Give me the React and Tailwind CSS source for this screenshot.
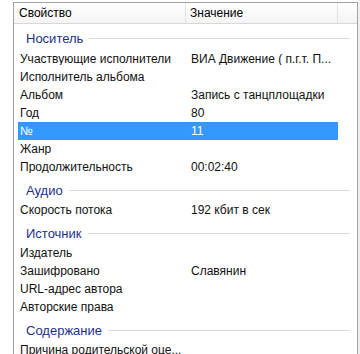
import React from "react";

const Row = ({ label, value, selected }) => (
  <div
    className={`ml-[4px] flex h-[18px] w-[320px] items-center text-[12px] leading-none ${
      selected ? "bg-[#3399ff] text-white" : "text-[#111]"
    }`}
  >
    <div className="w-[171px] shrink-0 truncate pl-[2px]">{label}</div>
    <div className="min-w-0 flex-1 truncate pl-[2px]">{value}</div>
  </div>
);

const Group = ({ title, h = "h-[25px]" }) => (
  <div className={`ml-[12px] mr-[7px] flex ${h} items-center pt-[3px]`}>
    <span className="text-[13px] leading-none text-[#1e3287]">{title}</span>
    <div className="ml-[6px] h-px flex-1 bg-[#d6dbe3]" />
  </div>
);

export default function App() {
  return (
    <div
      className="flex h-[354px] w-[360px] overflow-hidden bg-white"
      style={{ fontFamily: '"Liberation Sans", Arial, sans-serif' }}
    >
      <div className="ml-[13px] mt-[2px] h-[360px] w-[345px] shrink-0 border-l border-r border-t border-[#a3a3a3]">
        <div className="flex h-[21px] border-b border-[#d8d8d8] bg-gradient-to-b from-white to-[#f4f4f4] text-[12px] leading-none text-black">
          <div className="flex w-[172px] items-center border-r border-[#e3e3e3] pl-[5px]">Свойство</div>
          <div className="flex w-[152px] items-center border-r border-[#e3e3e3] pl-[4px]">Значение</div>
          <div className="flex-1" />
        </div>
        <Group title="Носитель" h="h-[26px]" />
        <Row label="Участвующие исполнители" value="ВИА Движение ( п.г.т. П..." />
        <Row label="Исполнитель альбома" value="" />
        <Row label="Альбом" value="Запись с танцплощадки" />
        <Row label="Год" value="80" />
        <Row label="№" value="11" selected />
        <Row label="Жанр" value="" />
        <Row label="Продолжительность" value="00:02:40" />
        <Group title="Аудио" />
        <Row label="Скорость потока" value="192 кбит в сек" />
        <Group title="Источник" />
        <Row label="Издатель" value="" />
        <Row label="Зашифровано" value="Славянин" />
        <Row label="URL-адрес автора" value="" />
        <Row label="Авторские права" value="" />
        <Group title="Содержание" />
        <Row label="Причина родительской оце..." value="" />
      </div>
      <div className="flex-1 bg-[#f0f0f0]" />
    </div>
  );
}
